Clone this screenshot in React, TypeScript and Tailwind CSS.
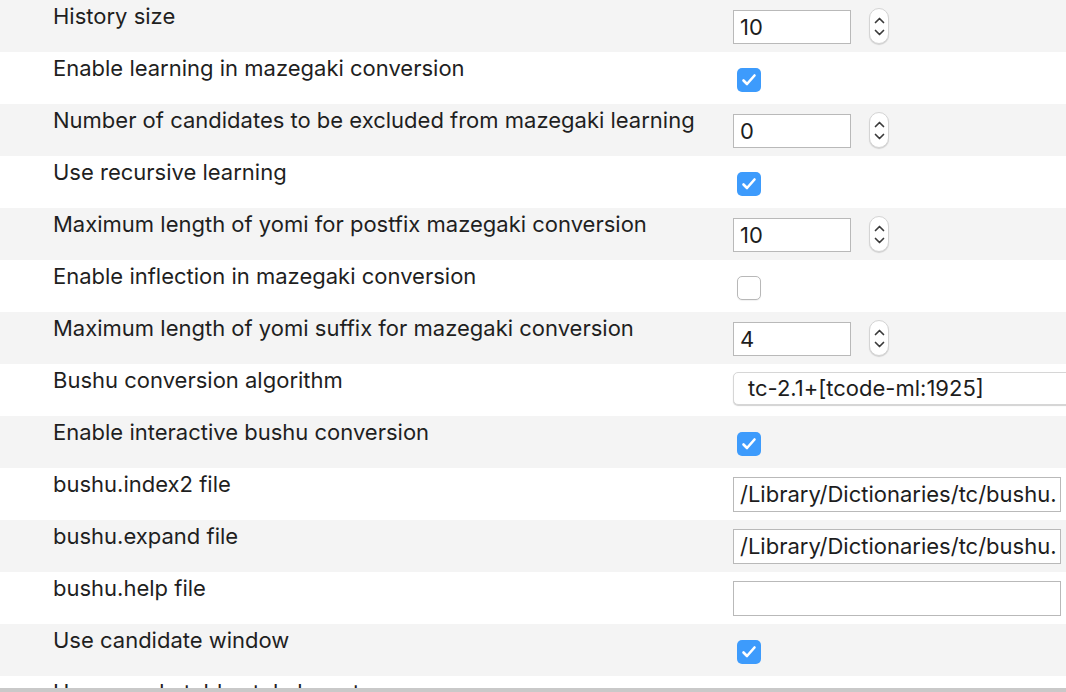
import React from "react";

type Row =
  | { label: string; kind: "number"; value: string }
  | { label: string; kind: "check"; checked: boolean }
  | { label: string; kind: "select"; value: string }
  | { label: string; kind: "file"; value: string };

const rows: Row[] = [
  { label: "History size", kind: "number", value: "10" },
  { label: "Enable learning in mazegaki conversion", kind: "check", checked: true },
  { label: "Number of candidates to be excluded from mazegaki learning", kind: "number", value: "0" },
  { label: "Use recursive learning", kind: "check", checked: true },
  { label: "Maximum length of yomi for postfix mazegaki conversion", kind: "number", value: "10" },
  { label: "Enable inflection in mazegaki conversion", kind: "check", checked: false },
  { label: "Maximum length of yomi suffix for mazegaki conversion", kind: "number", value: "4" },
  { label: "Bushu conversion algorithm", kind: "select", value: "tc-2.1+[tcode-ml:1925]" },
  { label: "Enable interactive bushu conversion", kind: "check", checked: true },
  { label: "bushu.index2 file", kind: "file", value: "/Library/Dictionaries/tc/bushu." },
  { label: "bushu.expand file", kind: "file", value: "/Library/Dictionaries/tc/bushu." },
  { label: "bushu.help file", kind: "file", value: "" },
  { label: "Use candidate window", kind: "check", checked: true },
  { label: "Use pseudo table style layout", kind: "check", checked: false },
];

function Stepper() {
  return (
    <div className="ml-[18px] mt-[-2px] flex h-[36px] w-[20px] flex-col items-center justify-center gap-[5px] rounded-full border border-[#d4d4d4] bg-white shadow-[0_1px_1px_rgba(0,0,0,0.15)]">
      <svg width="11" height="7" viewBox="0 0 11 7" fill="none">
        <path d="M1.5 5.5 L5.5 1.5 L9.5 5.5" stroke="#3a3a3a" strokeWidth="1.7" strokeLinecap="round" strokeLinejoin="round" />
      </svg>
      <svg width="11" height="7" viewBox="0 0 11 7" fill="none">
        <path d="M1.5 1.5 L5.5 5.5 L9.5 1.5" stroke="#3a3a3a" strokeWidth="1.7" strokeLinecap="round" strokeLinejoin="round" />
      </svg>
    </div>
  );
}

function Checkbox({ checked }: { checked: boolean }) {
  if (!checked) {
    return (
      <div className="ml-[4px] mt-[16px] h-[24px] w-[24px] rounded-[5px] border border-[#b8b8b8] bg-white shadow-[0_1px_1px_rgba(0,0,0,0.06)]" />
    );
  }
  return (
    <div className="ml-[4px] mt-[16px] flex h-[24px] w-[24px] items-center justify-center rounded-[5px] bg-[#3d9bfc]">
      <svg width="16" height="14" viewBox="0 0 16 14" fill="none">
        <path d="M2.5 7.5 L6 11 L13.5 2.5" stroke="white" strokeWidth="2.6" strokeLinecap="round" strokeLinejoin="round" />
      </svg>
    </div>
  );
}

function Control({ row }: { row: Row }) {
  if (row.kind === "number") {
    return (
      <div className="flex items-start pt-[10px]">
        <div className="flex h-[34px] w-[118px] items-center border border-[#b9b9b9] bg-white pl-[6px] text-[22px] text-[#1d1d1d]">
          {row.value}
        </div>
        <Stepper />
      </div>
    );
  }
  if (row.kind === "check") {
    return <Checkbox checked={row.checked} />;
  }
  if (row.kind === "select") {
    return (
      <div className="pt-[8px]">
        <div className="flex h-[33px] w-[360px] items-center rounded-[5px] border border-[#d6d6d6] bg-white pl-[14px] text-[22px] text-[#1d1d1d] shadow-[0_1px_1px_rgba(0,0,0,0.18)]">
          {row.value}
        </div>
      </div>
    );
  }
  return (
    <div className="pt-[9px]">
      <div className="flex h-[35px] w-[328px] items-center overflow-hidden whitespace-nowrap border border-[#b9b9b9] bg-white pl-[6px] text-[22px] text-[#1d1d1d]">
        {row.value}
      </div>
    </div>
  );
}

export default function App() {
  return (
    <div
      className="h-[692px] w-[1066px] overflow-hidden bg-white"
      style={{ fontFamily: "Inter, 'Liberation Sans', sans-serif" }}
    >
      <div className="h-[688px] overflow-hidden">
        {rows.map((row, i) => (
          <div
            key={i}
            className={`grid h-[52px] grid-cols-[733px_1fr] ${i % 2 === 0 ? "bg-[#f4f4f4]" : "bg-white"}`}
          >
            <div className="whitespace-nowrap pl-[53px] pt-[3px] text-[22px] leading-[26px] text-[#1f1f1f]">
              {row.label}
            </div>
            <div className="overflow-visible">
              <Control row={row} />
            </div>
          </div>
        ))}
      </div>
      <div className="h-[4px] bg-[#c9c9c9]" />
    </div>
  );
}
